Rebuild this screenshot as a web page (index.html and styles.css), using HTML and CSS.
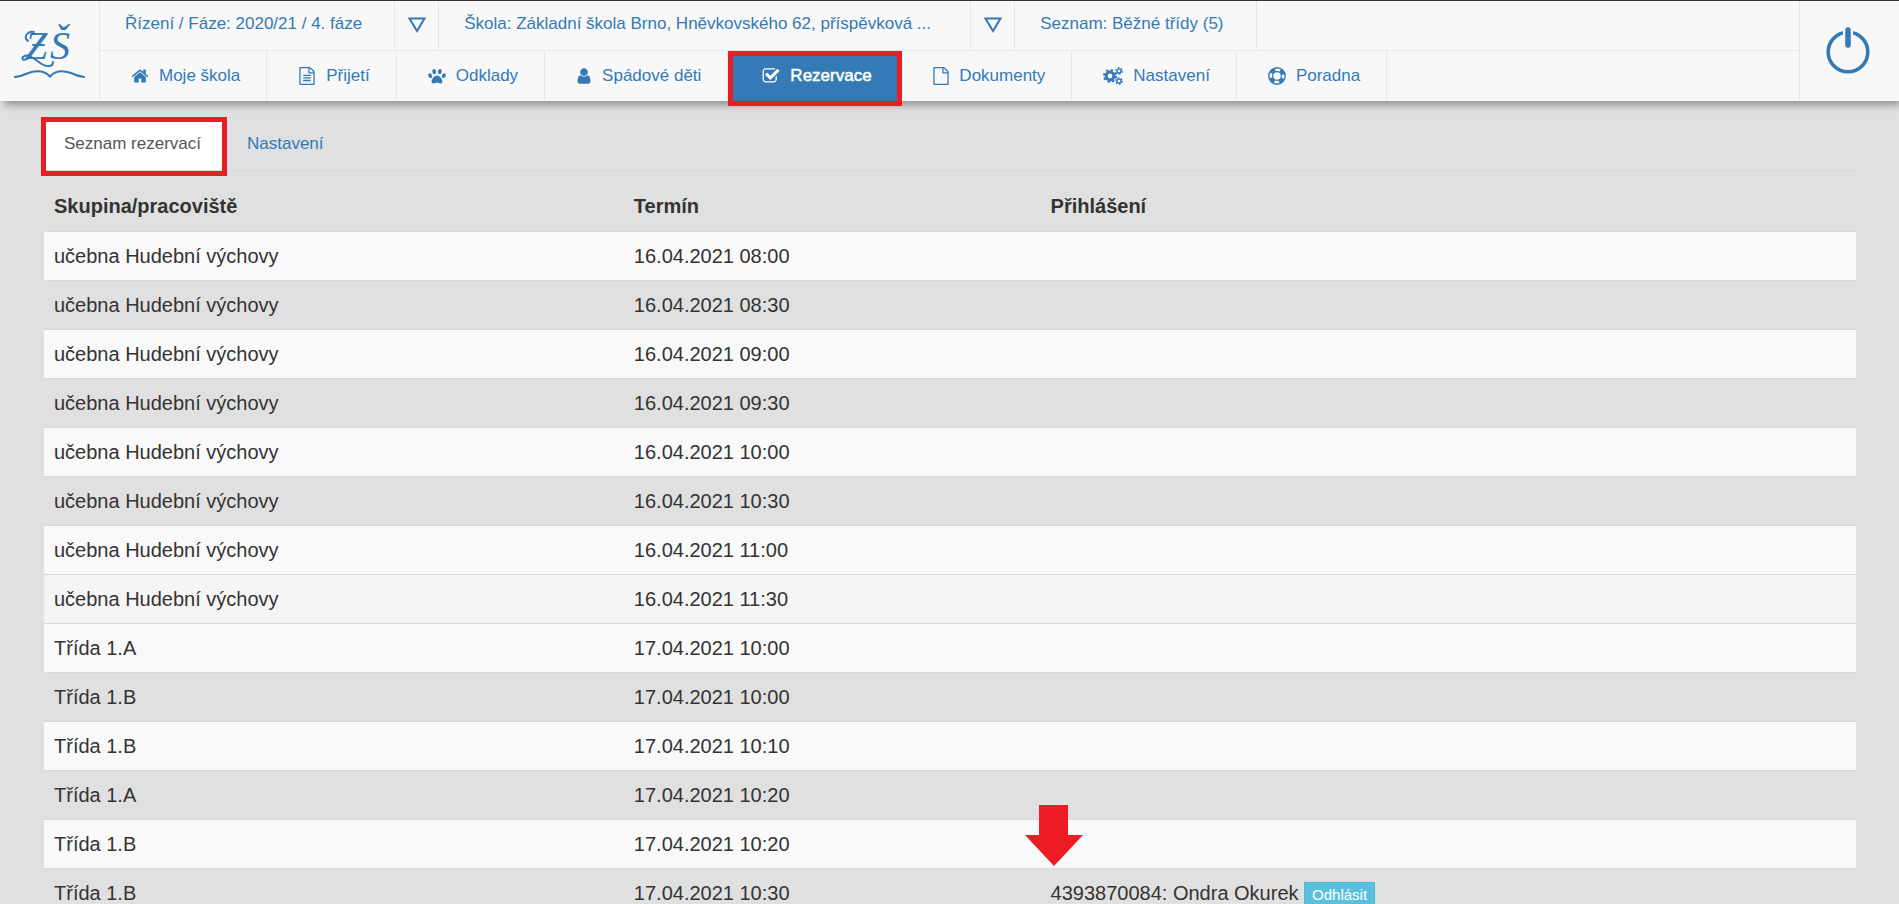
FILE: index.html
```html
<!DOCTYPE html>
<html lang="cs">
<head>
<meta charset="utf-8">
<title>Rezervace</title>
<link rel="stylesheet" href="styles.css">
</head>
<body>
<header class="topbar">
  <a class="logo" href="#" aria-label="ZŠ">
    <svg width="72" height="64" viewBox="0 0 72 64" aria-hidden="true">
      <g class="logo-text"><text x="11" y="40">Z</text><text x="36" y="40">Š</text></g>
      <g fill="none" stroke="currentColor" stroke-linecap="round">
        <path stroke-width="2" d="M14 22Q10 19 13 15Q15 12 20 13M19 26H30M13 40Q7 42 9 38Q13 34 22 41T35 47Q39 47 39 43"/>
        <path stroke-width="2" d="M1 58Q8 57 13 54.500Q28 49 36 57.500Q43 49 57 54Q63 57 70 58"/>
      </g>
    </svg>
  </a>
  <div class="menus">
    <nav class="context" aria-label="Kontext">
      <a class="context-link" href="#">Řízení / Fáze: 2020/21 / 4. fáze</a>
      <button class="caret" type="button" aria-label="Vybrat fázi"><svg width="18" height="16" viewBox="0 0 18 16"><path d="M1.500 1.500h15L9 14z"/></svg></button>
      <a class="context-link context-school" href="#">Škola: Základní škola Brno, Hněvkovského 62, příspěvková ...</a>
      <button class="caret" type="button" aria-label="Vybrat školu"><svg width="18" height="16" viewBox="0 0 18 16"><path d="M1.500 1.500h15L9 14z"/></svg></button>
      <a class="context-link" href="#">Seznam: Běžné třídy (5)</a>
    </nav>
    <nav class="sections" aria-label="Hlavní menu">
      <a class="section" href="#"><svg class="icon" viewBox="0 0 1792 1792"><path d="M1472 992v480q0 26-19 45t-45 19h-384v-384h-256v384h-384q-26 0-45-19t-19-45v-480q0-1 .5-3t.5-3l575-474 575 474q1 2 1 6zm223-69l-62 74q-8 9-21 11h-3q-13 0-21-7l-692-577-692 577q-12 8-24 7-13-2-21-11l-62-74q-8-10-7-23.500t11-21.500l719-599q32-26 76-26t76 26l244 204v-195q0-14 9-23t23-9h192q14 0 23 9t9 23v408l219 182q10 8 11 21.500t-7 23.500z"/></svg>Moje škola</a>
      <a class="section" href="#"><svg class="icon" viewBox="0 0 1792 1792"><path d="M1596 380q28 28 48 76t20 88v1152q0 40-28 68t-68 28h-1344q-40 0-68-28t-28-68v-1600q0-40 28-68t68-28h896q40 0 88 20t76 48zm-444-244v376h376q-10-29-22-41l-313-313q-12-12-41-22zm384 1528v-1024h-416q-40 0-68-28t-28-68v-416h-768v1536h1280zm-1024-864q0-14 9-23t23-9h704q14 0 23 9t9 23v64q0 14-9 23t-23 9h-704q-14 0-23-9t-9-23v-64zm736 224q14 0 23 9t9 23v64q0 14-9 23t-23 9h-704q-14 0-23-9t-9-23v-64q0-14 9-23t23-9h704zm0 256q14 0 23 9t9 23v64q0 14-9 23t-23 9h-704q-14 0-23-9t-9-23v-64q0-14 9-23t23-9h704z"/></svg>Přijetí</a>
      <a class="section" href="#"><svg class="icon" viewBox="0 0 18 18"><ellipse cx="6.200" cy="4.600" rx="1.900" ry="2.700" transform="rotate(-12 6.200 4.600)"/><ellipse cx="11.800" cy="4.600" rx="1.900" ry="2.700" transform="rotate(12 11.800 4.600)"/><ellipse cx="2.200" cy="8.700" rx="1.800" ry="2.400" transform="rotate(-25 2.200 8.700)"/><ellipse cx="15.800" cy="8.700" rx="1.800" ry="2.400" transform="rotate(25 15.800 8.700)"/><path d="M9 8.600c2.400 0 5.400 3.600 5.400 5.900 0 1.500-1 2-2.200 2-1.300 0-2-.9-3.200-.9s-1.900.9-3.200.9c-1.200 0-2.200-.5-2.200-2C3.600 12.200 6.600 8.600 9 8.600z"/></svg>Odklady</a>
      <a class="section" href="#"><svg class="icon icon-narrow" viewBox="128 0 1536 1792"><path d="M1536 1399q0 109-62.500 187t-150.500 78h-854q-88 0-150.500-78t-62.500-187q0-85 8.500-160.500t31.500-152 58.500-131 94-89 134.500-34.500q131 128 313 128t313-128q76 0 134.500 34.500t94 89 58.500 131 31.500 152 8.500 160.500zm-256-887q0 159-112.500 271.500t-271.500 112.500-271.500-112.500-112.500-271.500 112.500-271.500 271.500-112.500 271.500 112.500 112.500 271.500z"/></svg>Spádové děti</a>
      <a class="section section-active" href="#" aria-current="page"><svg class="icon" viewBox="0 0 1792 1792"><path d="M1472 930v318q0 119-84.500 203.500t-203.500 84.500h-832q-119 0-203.500-84.500t-84.500-203.500v-832q0-119 84.500-203.500t203.500-84.500h832q63 0 117 25 15 7 18 23 3 17-9 29l-49 49q-10 10-23 10-3 0-9-2-23-6-45-6h-832q-66 0-113 47t-47 113v832q0 66 47 113t113 47h832q66 0 113-47t47-113v-254q0-13 9-22l64-64q10-10 23-10 6 0 12 3 20 8 20 29zm231-489l-814 814q-24 24-57 24t-57-24l-430-430q-24-24-24-57t24-57l110-110q24-24 57-24t57 24l263 263 647-647q24-24 57-24t57 24l110 110q24 24 24 57t-24 57z"/></svg>Rezervace</a>
      <a class="section" href="#"><svg class="icon icon-narrow" viewBox="128 0 1536 1792"><path d="M1596 380q28 28 48 76t20 88v1152q0 40-28 68t-68 28h-1344q-40 0-68-28t-28-68v-1600q0-40 28-68t68-28h896q40 0 88 20t76 48zm-444-244v376h376q-10-29-22-41l-313-313q-12-12-41-22zm384 1528v-1024h-416q-40 0-68-28t-28-68v-416h-768v1536h1280z"/></svg>Dokumenty</a>
      <a class="section" href="#"><svg class="icon icon-wide" viewBox="0 0 20 18"><g fill="none" stroke="currentColor"><circle cx="7" cy="9" r="3.900" stroke-width="3"/><circle cx="7" cy="9" r="6" stroke-width="2" stroke-dasharray="2.360 2.360"/><circle cx="16" cy="4" r="2.100" stroke-width="1.500"/><circle cx="16" cy="4" r="3.300" stroke-width="1.200" stroke-dasharray="1.700 1.750"/><circle cx="16" cy="14" r="2.100" stroke-width="1.500"/><circle cx="16" cy="14" r="3.300" stroke-width="1.200" stroke-dasharray="1.700 1.750"/></g></svg>Nastavení</a>
      <a class="section" href="#"><svg class="icon" viewBox="0 0 18 18"><g fill="none" stroke="currentColor"><circle cx="9" cy="9" r="8.200" stroke-width="1.400"/><circle cx="9" cy="9" r="4.400" stroke-width="1.200"/><circle cx="9" cy="9" r="6.300" stroke-width="4" stroke-dasharray="4.950 4.950" stroke-dashoffset="-2.475"/></g></svg>Poradna</a>
    </nav>
  </div>
  <button class="power" type="button" aria-label="Odhlásit se">
    <svg width="48" height="50" viewBox="0 0 48 50" fill="none" stroke="currentColor"><circle cx="24" cy="26" r="19.800" stroke-width="3.600"/><path stroke="#f8f8f8" stroke-width="10" d="M24 1v12"/><path stroke-width="5.500" stroke-linecap="round" d="M24 4v15"/></svg>
  </button>
</header>
<main class="content">
  <nav class="tabs" aria-label="Rezervace">
    <a class="tab tab-active" href="#" aria-current="page">Seznam rezervací</a>
    <a class="tab" href="#">Nastavení</a>
  </nav>
  <table class="slots">
    <colgroup><col class="col-group"><col class="col-time"><col></colgroup>
    <thead><tr><th scope="col">Skupina/pracoviště</th><th scope="col">Termín</th><th scope="col">Přihlášení</th></tr></thead>
    <tbody>
      <tr><td>učebna Hudební výchovy</td><td>16.04.2021 08:00</td><td></td></tr>
      <tr><td>učebna Hudební výchovy</td><td>16.04.2021 08:30</td><td></td></tr>
      <tr><td>učebna Hudební výchovy</td><td>16.04.2021 09:00</td><td></td></tr>
      <tr><td>učebna Hudební výchovy</td><td>16.04.2021 09:30</td><td></td></tr>
      <tr><td>učebna Hudební výchovy</td><td>16.04.2021 10:00</td><td></td></tr>
      <tr><td>učebna Hudební výchovy</td><td>16.04.2021 10:30</td><td></td></tr>
      <tr><td>učebna Hudební výchovy</td><td>16.04.2021 11:00</td><td></td></tr>
      <tr class="row-hover"><td>učebna Hudební výchovy</td><td>16.04.2021 11:30</td><td></td></tr>
      <tr><td>Třída 1.A</td><td>17.04.2021 10:00</td><td></td></tr>
      <tr><td>Třída 1.B</td><td>17.04.2021 10:00</td><td></td></tr>
      <tr><td>Třída 1.B</td><td>17.04.2021 10:10</td><td></td></tr>
      <tr><td>Třída 1.A</td><td>17.04.2021 10:20</td><td></td></tr>
      <tr><td>Třída 1.B</td><td>17.04.2021 10:20</td><td></td></tr>
      <tr><td>Třída 1.B</td><td>17.04.2021 10:30</td><td class="booking">4393870084: Ondra Okurek <button class="sign-off" type="button">Odhlásit</button><svg class="arrow" width="58" height="61" viewBox="0 0 58 61" aria-hidden="true"><path d="M14 0h29v30h15L29 61 0 30h14z"/></svg></td></tr>
    </tbody>
  </table>
</main>
</body>
</html>
```
FILE: styles.css
```css
* {
  box-sizing: border-box;
}

html {
  height: 100%;
  overflow: hidden;
}

body {
  height: 100%;
  margin: 0;
  overflow: hidden;
  background: #e0e0e0;
  color: #333;
  font-family: "Liberation Sans", Arial, sans-serif;
  font-size: 20px;
  line-height: 28px;
}

a {
  color: #337ab7;
  text-decoration: none;
}

button {
  margin: 0;
  font-family: inherit;
  cursor: pointer;
}

.topbar {
  position: relative;
  display: flex;
  border-top: 1px solid #332f33;
  background: #f8f8f8;
  box-shadow: 3px 5px 8px -1px rgba(0, 0, 0, 0.35);
  font-size: 17px;
  line-height: 24px;
}

.logo {
  display: flex;
  flex: none;
  align-items: center;
  justify-content: center;
  width: 100px;
  border-right: 1px solid #e9e9e9;
}

.logo-text {
  fill: currentColor;
  font-family: "Liberation Serif", "Times New Roman", serif;
  font-size: 40px;
  font-style: italic;
}

.menus {
  flex: 1;
  min-width: 0;
}

.context,
.sections {
  display: flex;
  white-space: nowrap;
}

.context {
  height: 50px;
  padding-bottom: 1px;
  border-bottom: 1px solid #e7e7e7;
}

.context-link {
  display: flex;
  align-items: center;
  padding: 0 32px 2px 25px;
  border-right: 1px solid #e7e7e7;
}

.context-school {
  min-width: 532px;
}

.caret {
  display: flex;
  align-items: center;
  justify-content: center;
  width: 44px;
  padding: 0;
  border: 0;
  border-right: 1px solid #e7e7e7;
  background: none;
  color: #337ab7;
}

.caret path {
  fill: none;
  stroke: currentColor;
  stroke-width: 2;
}

.section {
  display: flex;
  align-items: center;
  gap: 10px;
  height: 50px;
  padding: 0 26px 0 31px;
  border-right: 1px solid #e7e7e7;
}

.icon {
  flex: none;
  width: 18px;
  height: 18px;
  fill: currentColor;
}

.icon-narrow {
  width: 16px;
}

.icon-wide {
  width: 20px;
}

.section-active {
  position: relative;
  min-width: 174px;
  padding-left: 34px;
  border-right: 0;
  background: #337ab7;
  color: #fff;
  -webkit-text-stroke: 0.5px #fff;
}

.section-active::after {
  content: "";
  position: absolute;
  inset: 0 0 -5px;
  border: 5px solid #ea1c24;
}

.power {
  display: flex;
  flex: none;
  align-items: center;
  justify-content: center;
  width: 100px;
  padding: 0 3px 0 0;
  border: 0;
  border-left: 1px solid #e7e7e7;
  background: none;
  color: #337ab7;
}

.content {
  padding: 20px 43px 0 44px;
}

.tabs {
  display: flex;
  gap: 3px;
  border-bottom: 1px solid #dadada;
  font-size: 17px;
  line-height: 24px;
}

.tab {
  padding: 11px 23px 14px 20px;
}

.tab-active {
  position: relative;
  background: #fff;
  color: #555;
}

.tab-active::after {
  content: "";
  position: absolute;
  inset: -4px -3px -6px;
  border: 5px solid #ea1c24;
}

.slots {
  width: 100%;
  margin-top: 11px;
  border-spacing: 0;
  table-layout: fixed;
}

.col-group {
  width: 32%;
}

.col-time {
  width: 23%;
}

.slots th,
.slots td {
  height: 49px;
  padding: 10px;
  border-top: 1px solid #d8d8d8;
  text-align: left;
  vertical-align: top;
}

.slots th {
  border-top: 0;
}

.slots tbody tr:nth-child(odd) {
  background: #f9f9f9;
}

.slots .row-hover {
  background: #f5f5f5;
}

.booking {
  position: relative;
}

.sign-off {
  padding: 1px 7px;
  border: 1px solid #46b8da;
  background: #5bc0de;
  color: #fff;
  font-size: 15px;
  line-height: 22px;
}

.arrow {
  position: absolute;
  top: -64px;
  left: -16px;
  fill: #ed1c24;
}
```
